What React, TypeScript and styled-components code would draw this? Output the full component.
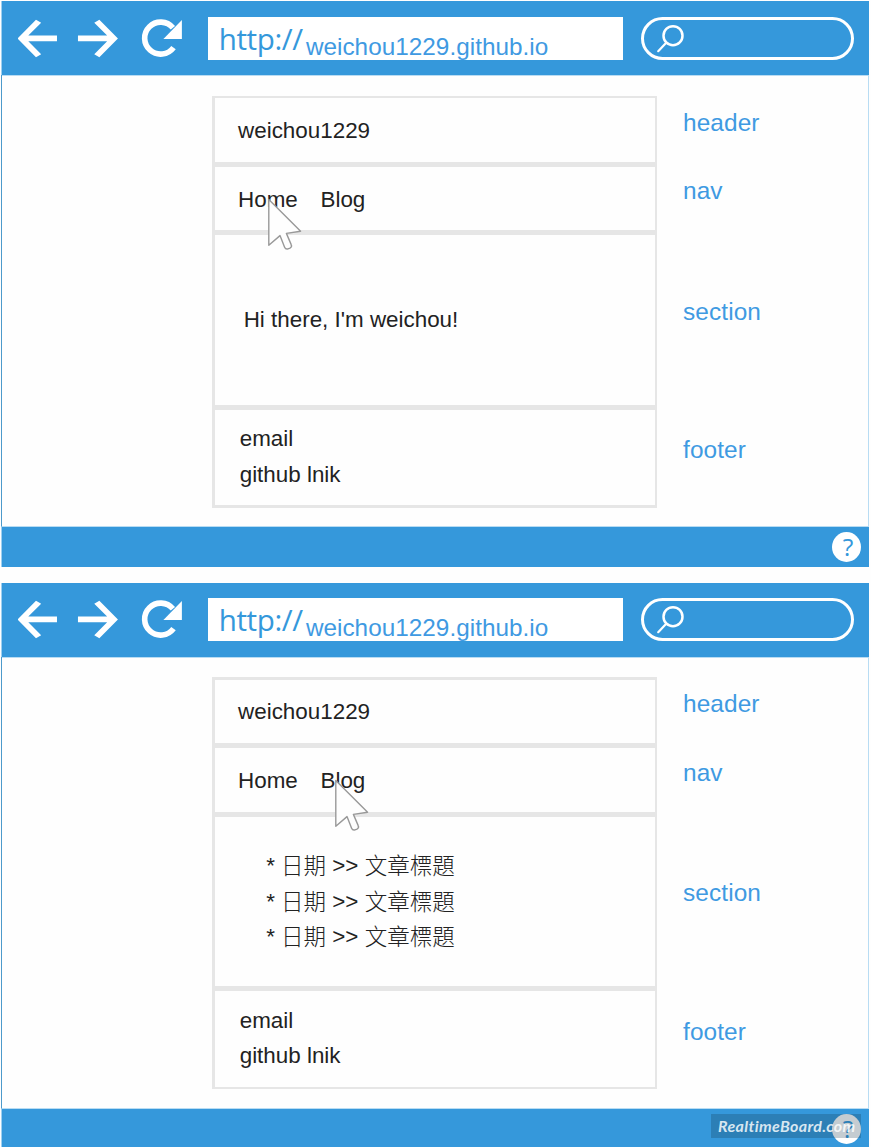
import React from 'react';
import styled, { createGlobalStyle } from 'styled-components';

const BLUE = '#3598db';

const GlobalStyle = createGlobalStyle`
  * { box-sizing: border-box; }
  html, body { margin: 0; padding: 0; background: #fefefe; overflow: hidden; }
  body { font-family: 'Liberation Sans', 'Noto Sans CJK TC', sans-serif; }
`;

const Board = styled.main`
  width: 871px;
  height: 1147px;
  padding: 1px 2px 0 1px;
  display: flex;
  flex-direction: column;
  gap: 16px;
  overflow: hidden;
`;

const Browser = styled.section`
  position: relative;
  flex: none;
  width: 868px;
  height: 566px;
  display: flex;
  flex-direction: column;
`;

const Toolbar = styled.header<{ $shift: number }>`
  flex: none;
  height: 74px;
  padding: ${p => 16 - p.$shift}px 0 0 16px;
  display: flex;
  align-items: flex-start;
  background: ${BLUE};
  border-left: 1px solid #9fd0f0;
`;

const NavIcons = styled.svg`
  flex: none;
  width: 190.4px;
  height: 43px;
  display: block;
  fill: #fff;
`;

const Address = styled.div`
  flex: none;
  width: 414.3px;
  height: 43px;
  padding-left: 10.3px;
  display: flex;
  align-items: baseline;
  background: #fff;
  white-space: nowrap;
`;

const Scheme = styled.span`
  width: 87.2px;
  font: 29.6px/43px 'Open Sans', sans-serif;
  letter-spacing: -0.4px;
  color: ${BLUE};
`;

const Host = styled.span`
  position: relative;
  top: 4.7px;
  font-size: 24.3px;
  line-height: 28px;
  letter-spacing: 0.03px;
  color: #3f9ae2;
`;

const Search = styled.div`
  flex: none;
  width: 213px;
  height: 43px;
  margin-left: 18.2px;
  padding: 4px 0 0 12px;
  border: 3px solid #fff;
  border-radius: 22px;
  svg { display: block; }
`;

const Viewport = styled.div<{ $shift: number }>`
  flex: 1;
  padding: ${p => 21 - p.$shift}px 0 0 210px;
  display: flex;
  align-items: flex-start;
  background: #fefefe;
  border: 1px solid #b8dcf3;
  border-top: 0;
  border-left-color: #4d9acb;
  box-shadow: inset 0 1px 0 #b9dcf3;
`;

const Card = styled.div`
  flex: none;
  width: 445px;
  height: 412px;
  padding: 2.4px 2.4px 2.6px 2.7px;
  display: flex;
  flex-direction: column;
  gap: 5px;
  background: #e6e6e6;
`;

const Row = styled.div<{ $height: number; $top: number; $left: number }>`
  flex: none;
  height: ${p => p.$height}px;
  padding: ${p => p.$top}px 0 0 ${p => p.$left}px;
  background: #fefefe;
  color: #222;
  font-size: 22.4px;
  line-height: 35.6px;
  white-space: pre;
`;

const Menu = styled.nav`
  display: flex;
  gap: 22.7px;
`;

const Post = styled.div`
  height: 35.6px;
  display: flex;
  gap: 6.2px;
`;

const Han = styled.span`
  margin-top: -1px;
  font-family: 'Noto Sans CJK TC', sans-serif;
  font-weight: 300;
  font-size: 22.5px;
`;

const Labels = styled.aside`
  flex: none;
  margin-left: 26px;
  padding-top: 12.5px;
  display: flex;
  flex-direction: column;
`;

const Label = styled.div<{ $height: number }>`
  height: ${p => p.$height}px;
  font-size: 24.4px;
  line-height: 28px;
  letter-spacing: 0.1px;
  color: #3f9ae2;
`;

const StatusBar = styled.footer`
  flex: none;
  height: 40px;
  padding: 5px 8px 0 0;
  display: flex;
  justify-content: flex-end;
  background: ${BLUE};
  border-left: 1px solid #9fd0f0;
`;

const Help = styled.div`
  width: 29px;
  height: 30px;
  border-radius: 50%;
  background: #fff;
  color: ${BLUE};
  font: 24.5px/29px 'Open Sans', sans-serif;
  text-align: center;
  padding-left: 3px;
`;

const Pointer = styled.svg<{ $x: number; $y: number }>`
  position: absolute;
  left: ${p => p.$x}px;
  top: ${p => p.$y}px;
  width: 36px;
  height: 54px;
`;

const Watermark = styled.div`
  position: absolute;
  left: 711px;
  top: 1114px;
  width: 150px;
  height: 24px;
  padding-left: 7px;
  background: rgba(20, 50, 70, 0.25);
  color: rgba(255, 255, 255, 0.82);
  font: italic 700 16px/23px Lato, sans-serif;
  letter-spacing: 0.35px;
  white-space: nowrap;
`;

type PageProps = {
  shift: number;
  sectionTop: number;
  sectionLeft: number;
  pointer: [number, number];
  children: React.ReactNode;
};

function BrowserPage({ shift, sectionTop, sectionLeft, pointer, children }: PageProps) {
  return (
    <Browser>
      <Toolbar $shift={shift}>
        <NavIcons viewBox="18 17 190.5 43">
          <path d="M17.5 38.6 36 19.8 41.2 22.8 28.3 35.5H57V41.2H28.3L41.2 54.2 36 57.2Z" />
          <path d="M118 38.6 99.4 19.8 94.3 22.8 107.2 35.5H78V41.2H107.2L94.3 54.2 99.4 57.2Z" />
          <path d="M173 27.8A16 16 0 1 0 173.6 47.6" fill="none" stroke="#fff" strokeWidth="5.6" />
          <path d="M182 20V39H163.5Z" />
        </NavIcons>
        <Address>
          <Scheme>http://</Scheme>
          <Host>weichou1229.github.io</Host>
        </Address>
        <Search>
          <svg width="30" height="30" viewBox="656 24 30 30" fill="none" stroke="#fff">
            <circle cx="673" cy="35.7" r="9.5" strokeWidth="2.5" />
            <path d="M666.2 42.8 658.2 51.2" strokeWidth="2.2" strokeLinecap="round" />
          </svg>
        </Search>
      </Toolbar>
      <Viewport $shift={shift}>
        <Card>
          <Row $height={63.5} $top={14.5} $left={23.4}>weichou1229</Row>
          <Row $height={63.6} $top={15.1} $left={23.4}>
            <Menu><span>Home</span><span>Blog</span></Menu>
          </Row>
          <Row $height={169.5} $top={sectionTop} $left={sectionLeft}>{children}</Row>
          <Row $height={95.2} $top={11.2} $left={25}>{'email\ngithub lnik'}</Row>
        </Card>
        <Labels>
          <Label $height={68.9}>header</Label>
          <Label $height={120.6}>nav</Label>
          <Label $height={138.4}>section</Label>
          <Label $height={28}>footer</Label>
        </Labels>
      </Viewport>
      <StatusBar><Help>?</Help></StatusBar>
      <Pointer $x={pointer[0]} $y={pointer[1]} viewBox="266 197 36 54">
        <path
          d="M268.8 199.4V245.2L280 235.6 284.6 247.2Q285.6 249.6 288 248.9L290 248.1Q292.3 247 291.2 244.6L286.4 233.4 300.6 231.2Z"
          fill="#fefefe" stroke="#999" strokeWidth="1.4" strokeLinejoin="round"
        />
      </Pointer>
    </Browser>
  );
}

export default function App() {
  return (
    <>
      <GlobalStyle />
      <Board>
        <BrowserPage shift={0} sectionTop={67} sectionLeft={29} pointer={[265, 196]}>
          Hi there, I'm weichou!
        </BrowserPage>
        <BrowserPage shift={0.6} sectionTop={31.2} sectionLeft={51.5} pointer={[332.2, 195.4]}>
          {[1, 2, 3].map(n => (
            <Post key={n}>
              <span>*</span><Han>日期</Han><span>&gt;&gt;</span><Han>文章標題</Han>
            </Post>
          ))}
        </BrowserPage>
      </Board>
      <Watermark>RealtimeBoard.com</Watermark>
    </>
  );
}
